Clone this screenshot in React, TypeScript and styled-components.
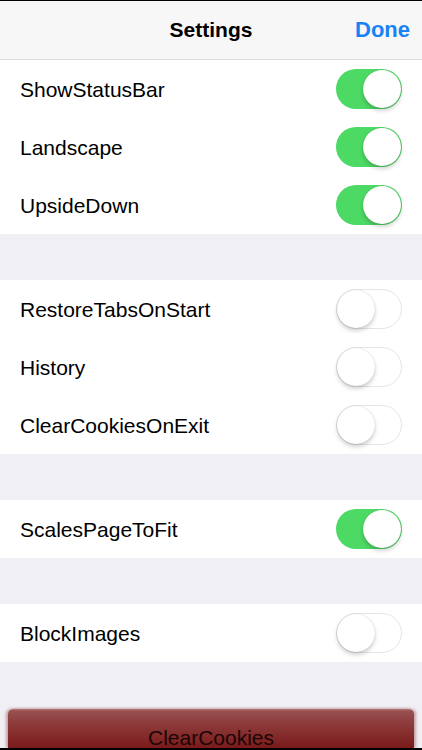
import React, { useState } from "react";
import styled, { createGlobalStyle } from "styled-components";

const Global = createGlobalStyle`
  html, body { margin: 0; padding: 0; background: #efeff4; }
  body { font-family: "Liberation Sans", Arial, sans-serif; }
  * { box-sizing: border-box; }
`;

const Screen = styled.div`
  width: 422px;
  height: 750px;
  overflow: hidden;
  display: flex;
  flex-direction: column;
  background: #efeff4;
  border-top: 1px solid #000;
  border-bottom: 2px solid #000;
`;

const NavBar = styled.div`
  height: 59px;
  flex: none;
  background: #f7f7f7;
  border-bottom: 1px solid #dcdce0;
  display: grid;
  grid-template-columns: 1fr auto 1fr;
  align-items: center;
  padding: 0 12px 0 12px;
`;

const Title = styled.div`
  grid-column: 2;
  font-size: 21px;
  font-weight: 700;
  color: #000;
`;

const DoneButton = styled.div`
  grid-column: 3;
  justify-self: end;
  font-size: 22px;
  font-weight: 700;
  color: #1a82f7;
`;

const Section = styled.div`
  background: #fff;
  display: flex;
  flex-direction: column;
  flex: none;
`;

const Gap = styled.div`
  height: 46px;
  flex: none;
`;

const Row = styled.div`
  height: 58px;
  display: flex;
  align-items: center;
  justify-content: space-between;
  padding: 0 20px 0 20px;
`;

const Label = styled.span`
  font-size: 21px;
  color: #000;
  padding-top: 2px;
`;

const Track = styled.button<{ $on: boolean }>`
  position: relative;
  width: 66px;
  height: 40px;
  border-radius: 20px;
  border: ${(p) => (p.$on ? "none" : "1.5px solid #e5e5e5")};
  background: ${(p) => (p.$on ? "#4cd964" : "#fff")};
  padding: 0;
  margin-right: 0;
  cursor: pointer;
  flex: none;
`;

const Knob = styled.span<{ $on: boolean }>`
  position: absolute;
  top: ${(p) => (p.$on ? "1px" : "0px")};
  left: ${(p) => (p.$on ? "27px" : "0px")};
  width: 38px;
  height: 38px;
  border-radius: 50%;
  background: #fff;
  box-shadow: 0 3px 4px rgba(0, 0, 0, 0.18), 0 0 1px rgba(0, 0, 0, 0.25);
`;

const BottomArea = styled.div`
  flex: 1;
  display: flex;
  align-items: flex-end;
  padding: 0 8px;
`;

const ClearButton = styled.div`
  width: 100%;
  height: 39px;
  border-radius: 5px 5px 0 0;
  background: linear-gradient(#b67b7b 0px, #985050 2px, #8e3c3c 14px, #7a1a1a 39px);
  box-shadow: -2px 0 3px rgba(120, 20, 20, 0.35), 2px 0 3px rgba(120, 20, 20, 0.35);
  display: flex;
  align-items: flex-end;
  justify-content: center;
  padding-bottom: 0px;
  font-size: 21px;
  color: #1a0505;
  line-height: 1;
`;

type Item = { key: string; on: boolean };

const sections: Item[][] = [
  [
    { key: "ShowStatusBar", on: true },
    { key: "Landscape", on: true },
    { key: "UpsideDown", on: true },
  ],
  [
    { key: "RestoreTabsOnStart", on: false },
    { key: "History", on: false },
    { key: "ClearCookiesOnExit", on: false },
  ],
  [{ key: "ScalesPageToFit", on: true }],
  [{ key: "BlockImages", on: false }],
];

function Toggle({ on, onClick }: { on: boolean; onClick: () => void }) {
  return (
    <Track $on={on} onClick={onClick}>
      <Knob $on={on} />
    </Track>
  );
}

export default function App() {
  const [state, setState] = useState<Record<string, boolean>>(() => {
    const s: Record<string, boolean> = {};
    sections.flat().forEach((i) => (s[i.key] = i.on));
    return s;
  });
  return (
    <>
      <Global />
      <Screen>
        <NavBar>
          <Title>Settings</Title>
          <DoneButton>Done</DoneButton>
        </NavBar>
        {sections.map((sec, si) => (
          <React.Fragment key={si}>
            {si > 0 && <Gap />}
            <Section>
              {sec.map((item) => (
                <Row key={item.key}>
                  <Label>{item.key}</Label>
                  <Toggle
                    on={state[item.key]}
                    onClick={() => setState({ ...state, [item.key]: !state[item.key] })}
                  />
                </Row>
              ))}
            </Section>
          </React.Fragment>
        ))}
        <BottomArea>
          <ClearButton>ClearCookies</ClearButton>
        </BottomArea>
      </Screen>
    </>
  );
}
